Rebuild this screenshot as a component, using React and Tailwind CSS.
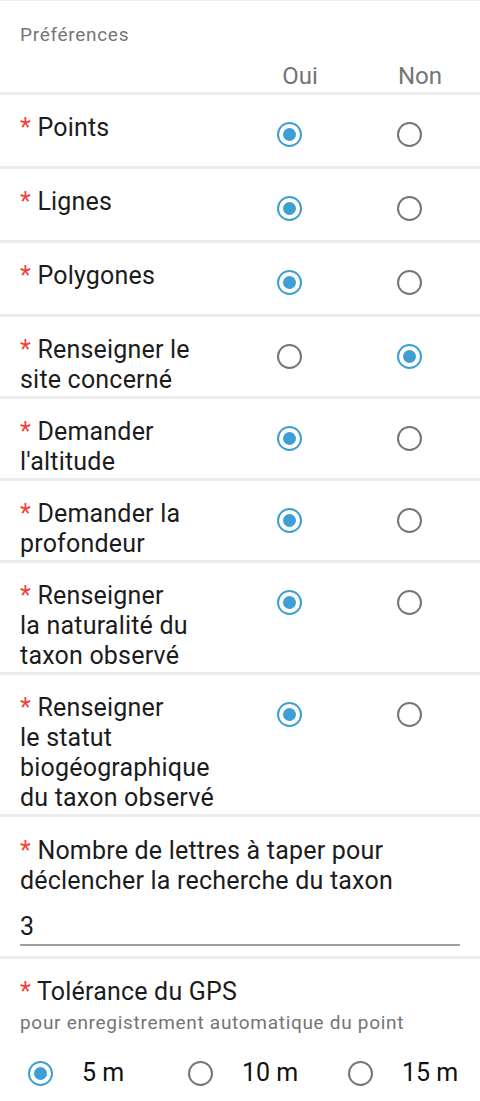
import React from "react";

const rows = [
  { label: ["Points"], yes: true },
  { label: ["Lignes"], yes: true },
  { label: ["Polygones"], yes: true },
  { label: ["Renseigner le", "site concerné"], yes: false },
  { label: ["Demander", "l'altitude"], yes: true },
  { label: ["Demander la", "profondeur"], yes: true },
  { label: ["Renseigner", "la naturalité du", "taxon observé"], yes: true },
  { label: ["Renseigner", "le statut", "biogéographique", "du taxon observé"], yes: true },
];

function Radio({ checked }) {
  return (
    <div
      className={
        "flex h-[25px] w-[25px] items-center justify-center rounded-full border-[2.5px] " +
        (checked ? "border-[#3d9fd3]" : "border-[#757575]")
      }
    >
      {checked && <div className="h-[13px] w-[13px] rounded-full bg-[#3d9fd3]" />}
    </div>
  );
}

function Star() {
  return <span className="text-[#f44336]">* </span>;
}

export default function App() {
  return (
    <div
      className="h-[1101px] w-[480px] overflow-hidden border-t border-[#eeeeee] bg-white"
      style={{ fontFamily: "Roboto, 'Noto Sans', sans-serif" }}
    >
      <div className="px-5 pt-[22px] text-[19px] leading-[24px] tracking-[0.7px] text-[#757575]">
        Préférences
      </div>

      <div className="flex pb-[3px] pt-[16px] text-[24px] leading-[26px] text-[#757575]">
        <div className="w-[240px]" />
        <div className="w-[120px] text-center">Oui</div>
        <div className="w-[120px] text-center">Non</div>
      </div>

      {rows.map((row, i) => (
        <div key={i} className="flex min-h-[74px] border-t-[3px] border-[#ebebeb]">
          <div className="w-[240px] whitespace-nowrap pb-[1px] pl-5 pt-[18px] text-[25px] leading-[30px] tracking-[0.2px] text-[#1c1c1c]">
            <Star />
            {row.label.map((line, j) => (
              <React.Fragment key={j}>
                {j > 0 && <br />}
                {line}
              </React.Fragment>
            ))}
          </div>
          <div className="w-[120px] pl-[37px] pt-[27px]">
            <Radio checked={row.yes} />
          </div>
          <div className="w-[120px] pl-[37px] pt-[27px]">
            <Radio checked={!row.yes} />
          </div>
        </div>
      ))}

      <div className="border-t-[3px] border-[#ebebeb] px-5 pt-[19px]">
        <div className="whitespace-nowrap text-[25px] leading-[30px] tracking-[0.2px] text-[#1c1c1c]">
          <Star />
          Nombre de lettres à taper pour
          <br />
          déclencher la recherche du taxon
        </div>
        <div className="mt-[16px] border-b-2 border-[#9e9e9e] pb-[2px] text-[25px] leading-[30px] text-[#1c1c1c]">
          3
        </div>
        <div className="h-[10px]" />
      </div>

      <div className="border-t-[3px] border-[#ebebeb] pt-[18px]">
        <div className="px-5 text-[25px] leading-[30px] tracking-[0.2px] text-[#1c1c1c]">
          <Star />
          Tolérance du GPS
        </div>
        <div className="mt-[5px] whitespace-nowrap px-5 text-[19px] leading-[22px] tracking-[0.7px] text-[#757575]">
          pour enregistrement automatique du point
        </div>
        <div className="mt-[15px] flex h-[48px] items-center">
          {["5 m", "10 m", "15 m"].map((v, i) => (
            <div key={v} className="flex w-[160px] items-center">
              <div className="ml-[28px]">
                <Radio checked={i === 0} />
              </div>
              <div className="ml-[29px] text-[25px] leading-[30px] text-[#111111]">{v}</div>
            </div>
          ))}
        </div>
        <div className="mt-[3px] h-[6px] bg-gradient-to-b from-white to-[#ececec]" />
      </div>
    </div>
  );
}
